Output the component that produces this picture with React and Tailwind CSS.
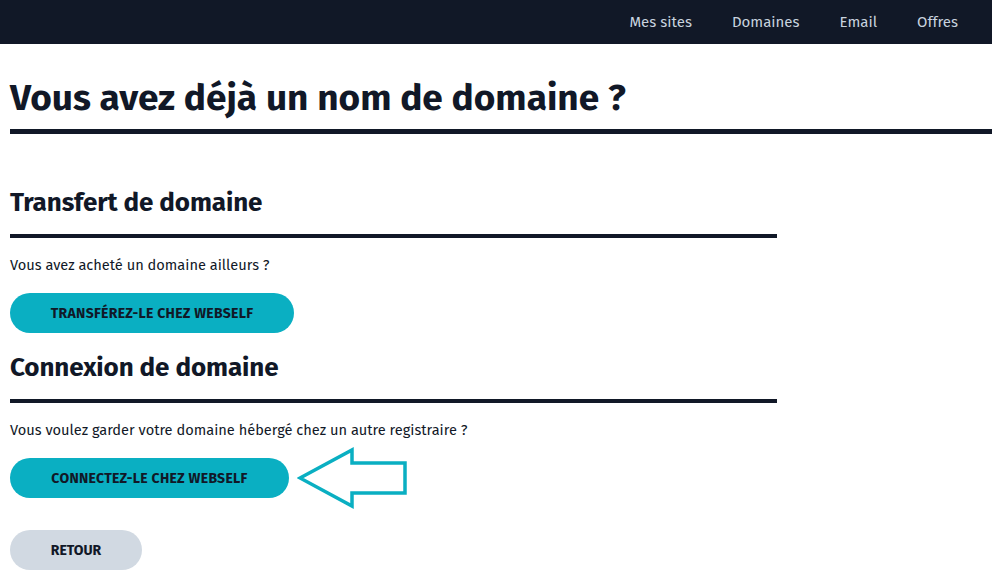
import React from 'react'

const font = { fontFamily: '"Fira Sans", Roboto, "Noto Sans", sans-serif' }

const Arrow = () => (
  <svg width="112" height="62" viewBox="0 0 112 62" className="shrink-0">
    <polygon
      points="3,31 55,3 55,16 108,16 108,46 55,46 55,59"
      fill="none"
      stroke="#0aafc2"
      strokeWidth="3.5"
      strokeLinejoin="miter"
    />
  </svg>
)

const Section = ({ title, text, button, arrow }) => (
  <section className="w-[767px]">
    <h2 className="text-[26px] font-bold leading-none pb-[18px] border-b-4 border-[#111827] tracking-[-0.1px]">{title}</h2>
    <p className="text-[14.6px] mt-[17px] leading-5">{text}</p>
    <div className="flex items-center gap-[8px] mt-[18px] h-[40px]">
      <button className="h-[40px] rounded-full bg-[#0aafc2] text-[#111827] text-[14px] font-bold uppercase tracking-[0.3px] px-0" style={{ width: button.w }}>
        {button.label}
      </button>
      {arrow && <Arrow />}
    </div>
  </section>
)

export default function App() {
  return (
    <div className="min-h-screen bg-white text-[#111827]" style={font}>
      <nav className="h-[44px] bg-[#111827] flex items-center justify-end pr-[34px] gap-[40px] text-[15px] text-[#c8d3df]">
        <a>Mes sites</a>
        <a>Domaines</a>
        <a>Email</a>
        <a>Offres</a>
      </nav>

      <div className="pl-[10px]">
        <h1 className="mt-[31px] text-[37px] font-bold leading-[45px] pb-[9px] border-b-[5px] border-[#111827]">
          Vous avez déjà un nom de domaine ?
        </h1>

        <div className="mt-[56px]">
          <Section
            title="Transfert de domaine"
            text="Vous avez acheté un domaine ailleurs ?"
            button={{ label: 'Transférez-le chez Webself', w: 284 }}
          />
        </div>
        <div className="mt-[22px]">
          <Section
            title="Connexion de domaine"
            text="Vous voulez garder votre domaine hébergé chez un autre registraire ?"
            button={{ label: 'Connectez-le chez Webself', w: 279 }}
            arrow
          />
        </div>

        <button className="mt-[32px] h-[40px] w-[132px] rounded-full bg-[#d1d9e2] text-[#111827] text-[14px] font-bold uppercase">
          Retour
        </button>
      </div>
    </div>
  )
}
